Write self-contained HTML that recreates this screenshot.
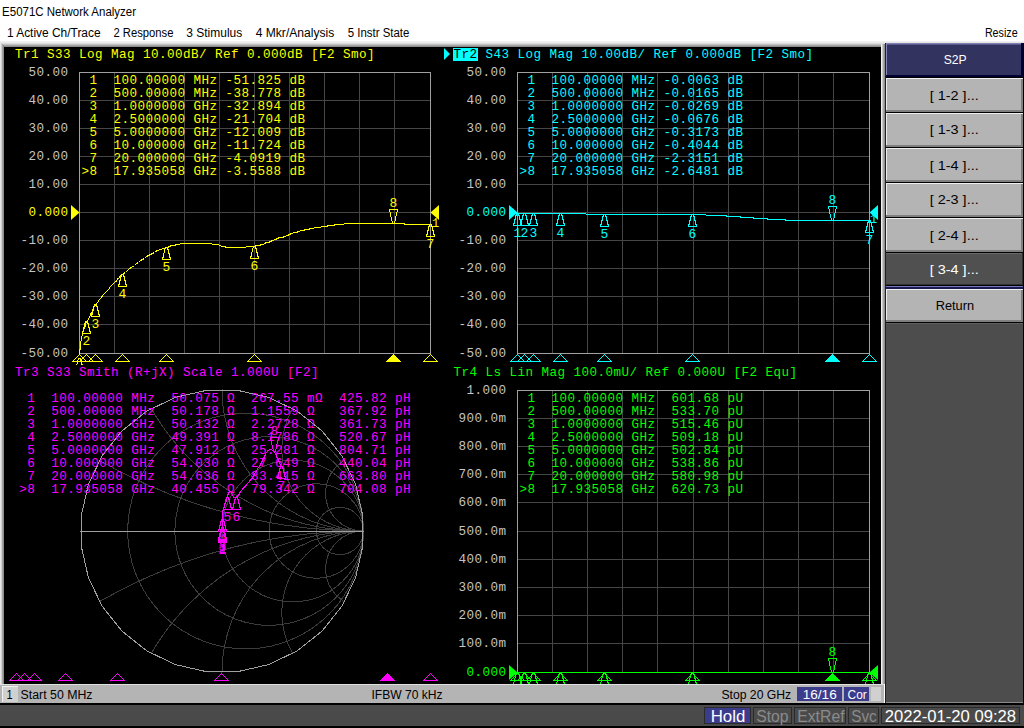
<!DOCTYPE html><html><head><meta charset="utf-8"><style>html,body{margin:0;padding:0;width:1024px;height:728px;overflow:hidden;background:#fff}</style></head><body><svg width="1024" height="728" viewBox="0 0 1024 728" style="display:block">
<rect x="0" y="0" width="1024" height="728" fill="#ffffff" />
<text x="2.10" y="16" fill="#000000" font-size="12.5" font-family='"Liberation Sans", sans-serif' textLength="133.90" lengthAdjust="spacingAndGlyphs" xml:space="preserve">E5071C Network Analyzer</text>
<text x="6.90" y="37" fill="#000000" font-size="12.5" font-family='"Liberation Sans", sans-serif' textLength="93.70" lengthAdjust="spacingAndGlyphs" xml:space="preserve">1 Active Ch/Trace</text>
<text x="113.40" y="37" fill="#000000" font-size="12.5" font-family='"Liberation Sans", sans-serif' textLength="60.00" lengthAdjust="spacingAndGlyphs" xml:space="preserve">2 Response</text>
<text x="186.30" y="37" fill="#000000" font-size="12.5" font-family='"Liberation Sans", sans-serif' textLength="55.90" lengthAdjust="spacingAndGlyphs" xml:space="preserve">3 Stimulus</text>
<text x="255.65" y="37" fill="#000000" font-size="12.5" font-family='"Liberation Sans", sans-serif' textLength="78.70" lengthAdjust="spacingAndGlyphs" xml:space="preserve">4 Mkr/Analysis</text>
<text x="347.80" y="37" fill="#000000" font-size="12.5" font-family='"Liberation Sans", sans-serif' textLength="61.55" lengthAdjust="spacingAndGlyphs" xml:space="preserve">5 Instr State</text>
<text x="984.90" y="37" fill="#000000" font-size="12.5" font-family='"Liberation Sans", sans-serif' textLength="32.70" lengthAdjust="spacingAndGlyphs" xml:space="preserve">Resize</text>
<rect x="0" y="41" width="885" height="643" fill="#e8e8e8" />
<rect x="0" y="41" width="885" height="1" fill="#f0f0f0" />
<rect x="0" y="42" width="885" height="1" fill="#ececec" />
<rect x="0" y="43" width="885" height="1" fill="#dcdcdc" />
<rect x="0" y="44" width="885" height="1" fill="#c0c0c0" />
<rect x="0" y="45" width="885" height="1" fill="#a4a4a4" />
<rect x="0" y="46" width="885" height="1" fill="#8c8c8c" />
<rect x="0" y="42" width="1" height="642" fill="#e8e8e8" />
<rect x="1" y="43" width="1" height="641" fill="#d0d0d0" />
<rect x="2" y="44" width="1" height="640" fill="#a4a4a4" />
<rect x="3" y="45" width="1" height="639" fill="#8c8c8c" />
<rect x="881" y="44" width="1" height="640" fill="#f0f0f0" />
<rect x="882" y="44" width="1" height="640" fill="#c8c8c8" />
<rect x="883" y="44" width="1" height="640" fill="#a8a8a8" />
<rect x="884" y="44" width="1" height="640" fill="#909090" />
<rect x="4" y="47" width="877" height="637" fill="#000000" />
<line x1="114.5" y1="72.5" x2="114.5" y2="353.5" stroke="#464646" stroke-width="1" />
<line x1="149.5" y1="72.5" x2="149.5" y2="353.5" stroke="#464646" stroke-width="1" />
<line x1="184.5" y1="72.5" x2="184.5" y2="353.5" stroke="#464646" stroke-width="1" />
<line x1="219.5" y1="72.5" x2="219.5" y2="353.5" stroke="#464646" stroke-width="1" />
<line x1="254.5" y1="72.5" x2="254.5" y2="353.5" stroke="#464646" stroke-width="1" />
<line x1="289.5" y1="72.5" x2="289.5" y2="353.5" stroke="#464646" stroke-width="1" />
<line x1="324.5" y1="72.5" x2="324.5" y2="353.5" stroke="#464646" stroke-width="1" />
<line x1="359.5" y1="72.5" x2="359.5" y2="353.5" stroke="#464646" stroke-width="1" />
<line x1="394.5" y1="72.5" x2="394.5" y2="353.5" stroke="#464646" stroke-width="1" />
<line x1="79.5" y1="100.5" x2="430.5" y2="100.5" stroke="#464646" stroke-width="1" />
<line x1="79.5" y1="128.5" x2="430.5" y2="128.5" stroke="#464646" stroke-width="1" />
<line x1="79.5" y1="156.5" x2="430.5" y2="156.5" stroke="#464646" stroke-width="1" />
<line x1="79.5" y1="184.5" x2="430.5" y2="184.5" stroke="#464646" stroke-width="1" />
<line x1="79.5" y1="212.5" x2="430.5" y2="212.5" stroke="#464646" stroke-width="1" />
<line x1="79.5" y1="240.5" x2="430.5" y2="240.5" stroke="#464646" stroke-width="1" />
<line x1="79.5" y1="268.5" x2="430.5" y2="268.5" stroke="#464646" stroke-width="1" />
<line x1="79.5" y1="296.5" x2="430.5" y2="296.5" stroke="#464646" stroke-width="1" />
<line x1="79.5" y1="324.5" x2="430.5" y2="324.5" stroke="#464646" stroke-width="1" />
<rect x="79.5" y="72.5" width="351" height="281" fill="none" stroke="#a0a0a0" stroke-width="1"/>
<line x1="552.5" y1="72.5" x2="552.5" y2="353.5" stroke="#464646" stroke-width="1" />
<line x1="587.5" y1="72.5" x2="587.5" y2="353.5" stroke="#464646" stroke-width="1" />
<line x1="622.5" y1="72.5" x2="622.5" y2="353.5" stroke="#464646" stroke-width="1" />
<line x1="657.5" y1="72.5" x2="657.5" y2="353.5" stroke="#464646" stroke-width="1" />
<line x1="693.5" y1="72.5" x2="693.5" y2="353.5" stroke="#464646" stroke-width="1" />
<line x1="728.5" y1="72.5" x2="728.5" y2="353.5" stroke="#464646" stroke-width="1" />
<line x1="763.5" y1="72.5" x2="763.5" y2="353.5" stroke="#464646" stroke-width="1" />
<line x1="798.5" y1="72.5" x2="798.5" y2="353.5" stroke="#464646" stroke-width="1" />
<line x1="833.5" y1="72.5" x2="833.5" y2="353.5" stroke="#464646" stroke-width="1" />
<line x1="517.5" y1="100.5" x2="869.5" y2="100.5" stroke="#464646" stroke-width="1" />
<line x1="517.5" y1="128.5" x2="869.5" y2="128.5" stroke="#464646" stroke-width="1" />
<line x1="517.5" y1="156.5" x2="869.5" y2="156.5" stroke="#464646" stroke-width="1" />
<line x1="517.5" y1="184.5" x2="869.5" y2="184.5" stroke="#464646" stroke-width="1" />
<line x1="517.5" y1="212.5" x2="869.5" y2="212.5" stroke="#464646" stroke-width="1" />
<line x1="517.5" y1="240.5" x2="869.5" y2="240.5" stroke="#464646" stroke-width="1" />
<line x1="517.5" y1="268.5" x2="869.5" y2="268.5" stroke="#464646" stroke-width="1" />
<line x1="517.5" y1="296.5" x2="869.5" y2="296.5" stroke="#464646" stroke-width="1" />
<line x1="517.5" y1="324.5" x2="869.5" y2="324.5" stroke="#464646" stroke-width="1" />
<rect x="517.5" y="72.5" width="352" height="281" fill="none" stroke="#a0a0a0" stroke-width="1"/>
<line x1="552.5" y1="390.5" x2="552.5" y2="672.5" stroke="#464646" stroke-width="1" />
<line x1="587.5" y1="390.5" x2="587.5" y2="672.5" stroke="#464646" stroke-width="1" />
<line x1="622.5" y1="390.5" x2="622.5" y2="672.5" stroke="#464646" stroke-width="1" />
<line x1="657.5" y1="390.5" x2="657.5" y2="672.5" stroke="#464646" stroke-width="1" />
<line x1="693.5" y1="390.5" x2="693.5" y2="672.5" stroke="#464646" stroke-width="1" />
<line x1="728.5" y1="390.5" x2="728.5" y2="672.5" stroke="#464646" stroke-width="1" />
<line x1="763.5" y1="390.5" x2="763.5" y2="672.5" stroke="#464646" stroke-width="1" />
<line x1="798.5" y1="390.5" x2="798.5" y2="672.5" stroke="#464646" stroke-width="1" />
<line x1="833.5" y1="390.5" x2="833.5" y2="672.5" stroke="#464646" stroke-width="1" />
<line x1="517.5" y1="418.5" x2="869.5" y2="418.5" stroke="#464646" stroke-width="1" />
<line x1="517.5" y1="446.5" x2="869.5" y2="446.5" stroke="#464646" stroke-width="1" />
<line x1="517.5" y1="474.5" x2="869.5" y2="474.5" stroke="#464646" stroke-width="1" />
<line x1="517.5" y1="502.5" x2="869.5" y2="502.5" stroke="#464646" stroke-width="1" />
<line x1="517.5" y1="531.5" x2="869.5" y2="531.5" stroke="#464646" stroke-width="1" />
<line x1="517.5" y1="559.5" x2="869.5" y2="559.5" stroke="#464646" stroke-width="1" />
<line x1="517.5" y1="587.5" x2="869.5" y2="587.5" stroke="#464646" stroke-width="1" />
<line x1="517.5" y1="615.5" x2="869.5" y2="615.5" stroke="#464646" stroke-width="1" />
<line x1="517.5" y1="643.5" x2="869.5" y2="643.5" stroke="#464646" stroke-width="1" />
<rect x="517.5" y="390.5" width="352" height="282" fill="none" stroke="#a0a0a0" stroke-width="1"/>
<text x="68.44" y="75.5" fill="#c4c4c4" font-size="12.6" letter-spacing="0.440" text-anchor="end" font-family='"Liberation Mono", monospace'  xml:space="preserve">50.00</text>
<text x="68.44" y="103.5" fill="#c4c4c4" font-size="12.6" letter-spacing="0.440" text-anchor="end" font-family='"Liberation Mono", monospace'  xml:space="preserve">40.00</text>
<text x="68.44" y="131.5" fill="#c4c4c4" font-size="12.6" letter-spacing="0.440" text-anchor="end" font-family='"Liberation Mono", monospace'  xml:space="preserve">30.00</text>
<text x="68.44" y="159.5" fill="#c4c4c4" font-size="12.6" letter-spacing="0.440" text-anchor="end" font-family='"Liberation Mono", monospace'  xml:space="preserve">20.00</text>
<text x="68.44" y="187.5" fill="#c4c4c4" font-size="12.6" letter-spacing="0.440" text-anchor="end" font-family='"Liberation Mono", monospace'  xml:space="preserve">10.00</text>
<text x="68.44" y="215.5" fill="#ffff00" font-size="12.6" letter-spacing="0.440" text-anchor="end" font-family='"Liberation Mono", monospace'  xml:space="preserve">0.000</text>
<text x="68.44" y="243.5" fill="#c4c4c4" font-size="12.6" letter-spacing="0.440" text-anchor="end" font-family='"Liberation Mono", monospace'  xml:space="preserve">-10.00</text>
<text x="68.44" y="271.5" fill="#c4c4c4" font-size="12.6" letter-spacing="0.440" text-anchor="end" font-family='"Liberation Mono", monospace'  xml:space="preserve">-20.00</text>
<text x="68.44" y="299.5" fill="#c4c4c4" font-size="12.6" letter-spacing="0.440" text-anchor="end" font-family='"Liberation Mono", monospace'  xml:space="preserve">-30.00</text>
<text x="68.44" y="327.5" fill="#c4c4c4" font-size="12.6" letter-spacing="0.440" text-anchor="end" font-family='"Liberation Mono", monospace'  xml:space="preserve">-40.00</text>
<text x="68.44" y="356.5" fill="#c4c4c4" font-size="12.6" letter-spacing="0.440" text-anchor="end" font-family='"Liberation Mono", monospace'  xml:space="preserve">-50.00</text>
<text x="506.44" y="75.5" fill="#c4c4c4" font-size="12.6" letter-spacing="0.440" text-anchor="end" font-family='"Liberation Mono", monospace'  xml:space="preserve">50.00</text>
<text x="506.44" y="103.5" fill="#c4c4c4" font-size="12.6" letter-spacing="0.440" text-anchor="end" font-family='"Liberation Mono", monospace'  xml:space="preserve">40.00</text>
<text x="506.44" y="131.5" fill="#c4c4c4" font-size="12.6" letter-spacing="0.440" text-anchor="end" font-family='"Liberation Mono", monospace'  xml:space="preserve">30.00</text>
<text x="506.44" y="159.5" fill="#c4c4c4" font-size="12.6" letter-spacing="0.440" text-anchor="end" font-family='"Liberation Mono", monospace'  xml:space="preserve">20.00</text>
<text x="506.44" y="187.5" fill="#c4c4c4" font-size="12.6" letter-spacing="0.440" text-anchor="end" font-family='"Liberation Mono", monospace'  xml:space="preserve">10.00</text>
<text x="506.44" y="215.5" fill="#00ffff" font-size="12.6" letter-spacing="0.440" text-anchor="end" font-family='"Liberation Mono", monospace'  xml:space="preserve">0.000</text>
<text x="506.44" y="243.5" fill="#c4c4c4" font-size="12.6" letter-spacing="0.440" text-anchor="end" font-family='"Liberation Mono", monospace'  xml:space="preserve">-10.00</text>
<text x="506.44" y="271.5" fill="#c4c4c4" font-size="12.6" letter-spacing="0.440" text-anchor="end" font-family='"Liberation Mono", monospace'  xml:space="preserve">-20.00</text>
<text x="506.44" y="299.5" fill="#c4c4c4" font-size="12.6" letter-spacing="0.440" text-anchor="end" font-family='"Liberation Mono", monospace'  xml:space="preserve">-30.00</text>
<text x="506.44" y="327.5" fill="#c4c4c4" font-size="12.6" letter-spacing="0.440" text-anchor="end" font-family='"Liberation Mono", monospace'  xml:space="preserve">-40.00</text>
<text x="506.44" y="356.5" fill="#c4c4c4" font-size="12.6" letter-spacing="0.440" text-anchor="end" font-family='"Liberation Mono", monospace'  xml:space="preserve">-50.00</text>
<text x="506.44" y="393.5" fill="#c4c4c4" font-size="12.6" letter-spacing="0.440" text-anchor="end" font-family='"Liberation Mono", monospace'  xml:space="preserve">1.000</text>
<text x="506.44" y="421.5" fill="#c4c4c4" font-size="12.6" letter-spacing="0.440" text-anchor="end" font-family='"Liberation Mono", monospace'  xml:space="preserve">900.0m</text>
<text x="506.44" y="449.5" fill="#c4c4c4" font-size="12.6" letter-spacing="0.440" text-anchor="end" font-family='"Liberation Mono", monospace'  xml:space="preserve">800.0m</text>
<text x="506.44" y="477.5" fill="#c4c4c4" font-size="12.6" letter-spacing="0.440" text-anchor="end" font-family='"Liberation Mono", monospace'  xml:space="preserve">700.0m</text>
<text x="506.44" y="505.5" fill="#c4c4c4" font-size="12.6" letter-spacing="0.440" text-anchor="end" font-family='"Liberation Mono", monospace'  xml:space="preserve">600.0m</text>
<text x="506.44" y="534.5" fill="#c4c4c4" font-size="12.6" letter-spacing="0.440" text-anchor="end" font-family='"Liberation Mono", monospace'  xml:space="preserve">500.0m</text>
<text x="506.44" y="562.5" fill="#c4c4c4" font-size="12.6" letter-spacing="0.440" text-anchor="end" font-family='"Liberation Mono", monospace'  xml:space="preserve">400.0m</text>
<text x="506.44" y="590.5" fill="#c4c4c4" font-size="12.6" letter-spacing="0.440" text-anchor="end" font-family='"Liberation Mono", monospace'  xml:space="preserve">300.0m</text>
<text x="506.44" y="618.5" fill="#c4c4c4" font-size="12.6" letter-spacing="0.440" text-anchor="end" font-family='"Liberation Mono", monospace'  xml:space="preserve">200.0m</text>
<text x="506.44" y="646.5" fill="#c4c4c4" font-size="12.6" letter-spacing="0.440" text-anchor="end" font-family='"Liberation Mono", monospace'  xml:space="preserve">100.0m</text>
<text x="506.44" y="675.5" fill="#00ff00" font-size="12.6" letter-spacing="0.440" text-anchor="end" font-family='"Liberation Mono", monospace'  xml:space="preserve">0.000</text>
<text x="15" y="58" fill="#ffff00" font-size="12.6" letter-spacing="0.440" text-anchor="start" font-family='"Liberation Mono", monospace'  xml:space="preserve">Tr1 S33 Log Mag 10.00dB/ Ref 0.000dB [F2 Smo]</text>
<polygon points="444,48 444,60 450,54" fill="#00ffff"/>
<rect x="453" y="48" width="25" height="13" fill="#00ffff" />
<text x="453.5" y="58" fill="#000000" font-size="12.6" letter-spacing="0.440" text-anchor="start" font-family='"Liberation Mono", monospace'  xml:space="preserve">Tr2</text>
<text x="453.5" y="58" fill="#00ffff" font-size="12.6" letter-spacing="0.440" text-anchor="start" font-family='"Liberation Mono", monospace'  xml:space="preserve">    S43 Log Mag 10.00dB/ Ref 0.000dB [F2 Smo]</text>
<text x="15" y="376" fill="#ff00ff" font-size="12.6" letter-spacing="0.440" text-anchor="start" font-family='"Liberation Mono", monospace'  xml:space="preserve">Tr3 S33 Smith (R+jX) Scale 1.000U [F2]</text>
<text x="453.5" y="376" fill="#00ff00" font-size="12.6" letter-spacing="0.440" text-anchor="start" font-family='"Liberation Mono", monospace'  xml:space="preserve">Tr4 Ls Lin Mag 100.0mU/ Ref 0.000U [F2 Equ]</text>
<defs><clipPath id="uc"><circle cx="222.00" cy="531.00" r="142.00"/></clipPath></defs>
<g clip-path="url(#uc)" shape-rendering="crispEdges" stroke-opacity="0.85"><circle cx="245.58" cy="531.00" r="117.92" fill="none" stroke="#464646"/><circle cx="269.17" cy="531.00" r="94.33" fill="none" stroke="#464646"/><circle cx="292.75" cy="531.00" r="70.75" fill="none" stroke="#464646"/><circle cx="316.33" cy="531.00" r="47.17" fill="none" stroke="#464646"/><circle cx="339.92" cy="531.00" r="23.58" fill="none" stroke="#464646"/><circle cx="363.50" cy="2.91" r="528.09" fill="none" stroke="#464646"/><circle cx="363.50" cy="1059.09" r="528.09" fill="none" stroke="#464646"/><circle cx="363.50" cy="285.91" r="245.09" fill="none" stroke="#464646"/><circle cx="363.50" cy="776.09" r="245.09" fill="none" stroke="#464646"/><circle cx="363.50" cy="389.50" r="141.50" fill="none" stroke="#464646"/><circle cx="363.50" cy="672.50" r="141.50" fill="none" stroke="#464646"/><circle cx="363.50" cy="449.30" r="81.70" fill="none" stroke="#464646"/><circle cx="363.50" cy="612.70" r="81.70" fill="none" stroke="#464646"/><circle cx="363.50" cy="493.09" r="37.91" fill="none" stroke="#464646"/><circle cx="363.50" cy="568.91" r="37.91" fill="none" stroke="#464646"/></g>
<polygon points="362.61,515.16 355.56,484.27 341.81,455.72 322.06,430.94 297.28,411.19 268.73,397.44 237.84,390.39 206.16,390.39 175.27,397.44 146.72,411.19 121.94,430.94 102.19,455.72 88.44,484.27 81.39,515.16 81.39,546.84 88.44,577.73 102.19,606.28 121.94,631.06 146.72,650.81 175.27,664.56 206.16,671.61 237.84,671.61 268.73,664.56 297.28,650.81 322.06,631.06 341.81,606.28 355.56,577.73 362.61,546.84" fill="none" stroke="#a0a0a0" shape-rendering="crispEdges"/>
<line x1="80" y1="531.5" x2="364" y2="531.5" stroke="#a0a0a0" stroke-width="1" />
<text x="81.5" y="84" fill="#ffff00" font-size="12.6" letter-spacing="0.440" text-anchor="start" font-family='"Liberation Mono", monospace'  xml:space="preserve"> 1  100.00000 MHz -51.825 dB</text>
<text x="81.5" y="97" fill="#ffff00" font-size="12.6" letter-spacing="0.440" text-anchor="start" font-family='"Liberation Mono", monospace'  xml:space="preserve"> 2  500.00000 MHz -38.778 dB</text>
<text x="81.5" y="110" fill="#ffff00" font-size="12.6" letter-spacing="0.440" text-anchor="start" font-family='"Liberation Mono", monospace'  xml:space="preserve"> 3  1.0000000 GHz -32.894 dB</text>
<text x="81.5" y="123" fill="#ffff00" font-size="12.6" letter-spacing="0.440" text-anchor="start" font-family='"Liberation Mono", monospace'  xml:space="preserve"> 4  2.5000000 GHz -21.704 dB</text>
<text x="81.5" y="136" fill="#ffff00" font-size="12.6" letter-spacing="0.440" text-anchor="start" font-family='"Liberation Mono", monospace'  xml:space="preserve"> 5  5.0000000 GHz -12.009 dB</text>
<text x="81.5" y="149" fill="#ffff00" font-size="12.6" letter-spacing="0.440" text-anchor="start" font-family='"Liberation Mono", monospace'  xml:space="preserve"> 6  10.000000 GHz -11.724 dB</text>
<text x="81.5" y="162" fill="#ffff00" font-size="12.6" letter-spacing="0.440" text-anchor="start" font-family='"Liberation Mono", monospace'  xml:space="preserve"> 7  20.000000 GHz -4.0919 dB</text>
<text x="81.5" y="175" fill="#ffff00" font-size="12.6" letter-spacing="0.440" text-anchor="start" font-family='"Liberation Mono", monospace'  xml:space="preserve">&gt;8  17.935058 GHz -3.5588 dB</text>
<text x="519.5" y="84" fill="#00ffff" font-size="12.6" letter-spacing="0.440" text-anchor="start" font-family='"Liberation Mono", monospace'  xml:space="preserve"> 1  100.00000 MHz -0.0063 dB</text>
<text x="519.5" y="97" fill="#00ffff" font-size="12.6" letter-spacing="0.440" text-anchor="start" font-family='"Liberation Mono", monospace'  xml:space="preserve"> 2  500.00000 MHz -0.0165 dB</text>
<text x="519.5" y="110" fill="#00ffff" font-size="12.6" letter-spacing="0.440" text-anchor="start" font-family='"Liberation Mono", monospace'  xml:space="preserve"> 3  1.0000000 GHz -0.0269 dB</text>
<text x="519.5" y="123" fill="#00ffff" font-size="12.6" letter-spacing="0.440" text-anchor="start" font-family='"Liberation Mono", monospace'  xml:space="preserve"> 4  2.5000000 GHz -0.0676 dB</text>
<text x="519.5" y="136" fill="#00ffff" font-size="12.6" letter-spacing="0.440" text-anchor="start" font-family='"Liberation Mono", monospace'  xml:space="preserve"> 5  5.0000000 GHz -0.3173 dB</text>
<text x="519.5" y="149" fill="#00ffff" font-size="12.6" letter-spacing="0.440" text-anchor="start" font-family='"Liberation Mono", monospace'  xml:space="preserve"> 6  10.000000 GHz -0.4044 dB</text>
<text x="519.5" y="162" fill="#00ffff" font-size="12.6" letter-spacing="0.440" text-anchor="start" font-family='"Liberation Mono", monospace'  xml:space="preserve"> 7  20.000000 GHz -2.3151 dB</text>
<text x="519.5" y="175" fill="#00ffff" font-size="12.6" letter-spacing="0.440" text-anchor="start" font-family='"Liberation Mono", monospace'  xml:space="preserve">&gt;8  17.935058 GHz -2.6481 dB</text>
<text x="19.2" y="402" fill="#ff00ff" font-size="12.6" letter-spacing="0.440" text-anchor="start" font-family='"Liberation Mono", monospace'  xml:space="preserve"> 1  100.00000 MHz  50.075 Ω  267.55 mΩ  425.82 pH</text>
<text x="19.2" y="415" fill="#ff00ff" font-size="12.6" letter-spacing="0.440" text-anchor="start" font-family='"Liberation Mono", monospace'  xml:space="preserve"> 2  500.00000 MHz  50.178 Ω  1.1559 Ω   367.92 pH</text>
<text x="19.2" y="428" fill="#ff00ff" font-size="12.6" letter-spacing="0.440" text-anchor="start" font-family='"Liberation Mono", monospace'  xml:space="preserve"> 3  1.0000000 GHz  50.132 Ω  2.2728 Ω   361.73 pH</text>
<text x="19.2" y="441" fill="#ff00ff" font-size="12.6" letter-spacing="0.440" text-anchor="start" font-family='"Liberation Mono", monospace'  xml:space="preserve"> 4  2.5000000 GHz  49.391 Ω  8.1786 Ω   520.67 pH</text>
<text x="19.2" y="454" fill="#ff00ff" font-size="12.6" letter-spacing="0.440" text-anchor="start" font-family='"Liberation Mono", monospace'  xml:space="preserve"> 5  5.0000000 GHz  47.912 Ω  25.281 Ω   804.71 pH</text>
<text x="19.2" y="467" fill="#ff00ff" font-size="12.6" letter-spacing="0.440" text-anchor="start" font-family='"Liberation Mono", monospace'  xml:space="preserve"> 6  10.000000 GHz  54.030 Ω  27.649 Ω   440.04 pH</text>
<text x="19.2" y="480" fill="#ff00ff" font-size="12.6" letter-spacing="0.440" text-anchor="start" font-family='"Liberation Mono", monospace'  xml:space="preserve"> 7  20.000000 GHz  54.636 Ω  83.415 Ω   663.80 pH</text>
<text x="19.2" y="493" fill="#ff00ff" font-size="12.6" letter-spacing="0.440" text-anchor="start" font-family='"Liberation Mono", monospace'  xml:space="preserve">&gt;8  17.935058 GHz  40.455 Ω  79.342 Ω   704.08 pH</text>
<text x="519.5" y="402" fill="#00ff00" font-size="12.6" letter-spacing="0.440" text-anchor="start" font-family='"Liberation Mono", monospace'  xml:space="preserve"> 1  100.00000 MHz  601.68 pU</text>
<text x="519.5" y="415" fill="#00ff00" font-size="12.6" letter-spacing="0.440" text-anchor="start" font-family='"Liberation Mono", monospace'  xml:space="preserve"> 2  500.00000 MHz  533.70 pU</text>
<text x="519.5" y="428" fill="#00ff00" font-size="12.6" letter-spacing="0.440" text-anchor="start" font-family='"Liberation Mono", monospace'  xml:space="preserve"> 3  1.0000000 GHz  515.46 pU</text>
<text x="519.5" y="441" fill="#00ff00" font-size="12.6" letter-spacing="0.440" text-anchor="start" font-family='"Liberation Mono", monospace'  xml:space="preserve"> 4  2.5000000 GHz  509.18 pU</text>
<text x="519.5" y="454" fill="#00ff00" font-size="12.6" letter-spacing="0.440" text-anchor="start" font-family='"Liberation Mono", monospace'  xml:space="preserve"> 5  5.0000000 GHz  502.84 pU</text>
<text x="519.5" y="467" fill="#00ff00" font-size="12.6" letter-spacing="0.440" text-anchor="start" font-family='"Liberation Mono", monospace'  xml:space="preserve"> 6  10.000000 GHz  538.86 pU</text>
<text x="519.5" y="480" fill="#00ff00" font-size="12.6" letter-spacing="0.440" text-anchor="start" font-family='"Liberation Mono", monospace'  xml:space="preserve"> 7  20.000000 GHz  580.98 pU</text>
<text x="519.5" y="493" fill="#00ff00" font-size="12.6" letter-spacing="0.440" text-anchor="start" font-family='"Liberation Mono", monospace'  xml:space="preserve">&gt;8  17.935058 GHz  620.73 pU</text>
<defs><clipPath id="p1"><rect x="4" y="47" width="438" height="318"/></clipPath><clipPath id="p2"><rect x="442" y="47" width="439" height="318"/></clipPath><clipPath id="p3"><rect x="4" y="365" width="438" height="319"/></clipPath><clipPath id="p4"><rect x="442" y="365" width="439" height="319"/></clipPath></defs>
<g clip-path="url(#p1)">
<clipPath id="c1"><rect x="79" y="72" width="352" height="282"/></clipPath>
<g clip-path="url(#c1)">
<path d="M79.5,358.5 L79.5,357.5 L79.5,356.5 L79.5,355.5 L79.5,354.5 L79.5,353.5 L79.5,352.5 L79.5,351.5 L79.5,350.5 L80.5,348.5 L80.5,347.5 L80.5,345.5 L80.5,344.5 L80.5,342.5 L80.5,341.5 L81.5,340.5 L81.5,338.5 L81.5,337.5 L81.5,336.5 L82.5,335.5 L82.5,333.5 L82.5,332.5 L83.5,331.5 L83.5,330.5 L83.5,329.5 L84.5,328.5 L84.5,327.5 L85.5,326.5 L85.5,324.5 L85.5,323.5 L86.5,322.5 L86.5,321.5 L87.5,320.5 L88.5,319.5 L88.5,318.5 L89.5,317.5 L89.5,316.5 L90.5,315.5 L90.5,314.5 L91.5,312.5 L92.5,311.5 L92.5,310.5 L93.5,308.5 L93.5,307.5 L94.5,306.5 L95.5,305.5 L95.5,304.5 L96.5,303.5 L97.5,302.5 L98.5,301.5 L98.5,300.5 L99.5,299.5 L100.5,298.5 L101.5,297.5 L102.5,295.5 L103.5,294.5 L104.5,293.5 L105.5,292.5 L106.5,291.5 L107.5,290.5 L108.5,289.5 L109.5,288.5 L109.5,287.5 L110.5,286.5 L111.5,285.5 L112.5,284.5 L113.5,283.5 L114.5,282.5 L115.5,281.5 L116.5,281.5 L116.5,280.5 L117.5,279.5 L117.5,278.5 L118.5,278.5 L119.5,277.5 L119.5,276.5 L120.5,275.5 L122.5,274.5 L123.5,273.5 L125.5,272.5 L127.5,270.5 L129.5,268.5 L131.5,267.5 L134.5,265.5 L136.5,263.5 L138.5,262.5 L140.5,260.5 L142.5,259.5 L144.5,258.5 L146.5,256.5 L148.5,255.5 L150.5,254.5 L152.5,253.5 L154.5,252.5 L155.5,251.5 L157.5,250.5 L158.5,250.5 L159.5,249.5 L161.5,249.5 L162.5,248.5 L164.5,248.5 L165.5,247.5 L167.5,247.5 L169.5,246.5 L171.5,245.5 L174.5,245.5 L176.5,244.5 L178.5,244.5 L181.5,243.5 L183.5,243.5 L186.5,243.5 L188.5,243.5 L191.5,243.5 L194.5,243.5 L197.5,243.5 L200.5,243.5 L202.5,243.5 L205.5,243.5 L206.5,243.5 L208.5,243.5 L210.5,243.5 L211.5,243.5 L212.5,244.5 L214.5,244.5 L215.5,244.5 L216.5,244.5 L218.5,244.5 L219.5,245.5 L220.5,245.5 L221.5,246.5 L223.5,246.5 L224.5,246.5 L226.5,247.5 L228.5,247.5 L230.5,247.5 L234.5,247.5 L237.5,247.5 L240.5,247.5 L244.5,247.5 L247.5,246.5 L251.5,246.5 L253.5,246.5 L256.5,245.5 L258.5,245.5 L259.5,245.5 L261.5,244.5 L263.5,244.5 L264.5,243.5 L266.5,242.5 L268.5,242.5 L270.5,241.5 L272.5,240.5 L275.5,239.5 L277.5,238.5 L279.5,237.5 L282.5,237.5 L284.5,236.5 L287.5,235.5 L289.5,234.5 L291.5,233.5 L294.5,232.5 L296.5,232.5 L298.5,231.5 L301.5,230.5 L303.5,230.5 L305.5,229.5 L308.5,229.5 L310.5,228.5 L312.5,228.5 L315.5,227.5 L317.5,227.5 L319.5,227.5 L322.5,226.5 L324.5,226.5 L326.5,226.5 L328.5,225.5 L330.5,225.5 L331.5,225.5 L333.5,225.5 L335.5,224.5 L337.5,224.5 L339.5,224.5 L340.5,224.5 L342.5,224.5 L343.5,224.5 L344.5,223.5 L346.5,223.5 L348.5,223.5 L350.5,223.5 L353.5,223.5 L357.5,223.5 L362.5,223.5 L367.5,223.5 L373.5,223.5 L379.5,223.5 L384.5,223.5 L389.5,223.5 L392.5,223.5 L395.5,223.5 L397.5,223.5 L399.5,223.5 L400.5,223.5 L401.5,223.5 L402.5,223.5 L403.5,223.5 L404.5,223.5 L404.5,224.5 L406.5,224.5 L408.5,224.5 L411.5,224.5 L414.5,224.5 L418.5,224.5 L421.5,224.5 L425.5,224.5 L427.5,224.5 L430.5,224.5" fill="none" stroke="#ffff00" stroke-width="1" shape-rendering="crispEdges" />
</g>
<polygon points="78.5,358.5 80.5,358.5 83.5,370.5 75.5,370.5" fill="none" stroke="#ffff00" shape-rendering="crispEdges"/>
<text x="79.5" y="382" fill="#ffff00" font-size="13" text-anchor="middle" font-family='"Liberation Mono", monospace'  xml:space="preserve">1</text>
<polygon points="85.5,321.5 87.5,321.5 90.5,333.5 82.5,333.5" fill="none" stroke="#ffff00" shape-rendering="crispEdges"/>
<text x="86.5" y="345" fill="#ffff00" font-size="13" text-anchor="middle" font-family='"Liberation Mono", monospace'  xml:space="preserve">2</text>
<polygon points="94.5,304.5 96.5,304.5 99.5,316.5 91.5,316.5" fill="none" stroke="#ffff00" shape-rendering="crispEdges"/>
<text x="95.5" y="328" fill="#ffff00" font-size="13" text-anchor="middle" font-family='"Liberation Mono", monospace'  xml:space="preserve">3</text>
<polygon points="121.5,274.5 123.5,274.5 126.5,286.5 118.5,286.5" fill="none" stroke="#ffff00" shape-rendering="crispEdges"/>
<text x="122.5" y="298" fill="#ffff00" font-size="13" text-anchor="middle" font-family='"Liberation Mono", monospace'  xml:space="preserve">4</text>
<polygon points="165.5,247.5 167.5,247.5 170.5,259.5 162.5,259.5" fill="none" stroke="#ffff00" shape-rendering="crispEdges"/>
<text x="166.5" y="271" fill="#ffff00" font-size="13" text-anchor="middle" font-family='"Liberation Mono", monospace'  xml:space="preserve">5</text>
<polygon points="253.5,246.5 255.5,246.5 258.5,258.5 250.5,258.5" fill="none" stroke="#ffff00" shape-rendering="crispEdges"/>
<text x="254.5" y="270" fill="#ffff00" font-size="13" text-anchor="middle" font-family='"Liberation Mono", monospace'  xml:space="preserve">6</text>
<polygon points="429.5,224.5 431.5,224.5 434.5,236.5 426.5,236.5" fill="none" stroke="#ffff00" shape-rendering="crispEdges"/>
<text x="430.5" y="248" fill="#ffff00" font-size="13" text-anchor="middle" font-family='"Liberation Mono", monospace'  xml:space="preserve">7</text>
<polygon points="389.5,209.5 397.5,209.5 394.5,223.5 392.5,223.5" fill="none" stroke="#ffff00" shape-rendering="crispEdges"/>
<text x="393.5" y="207" fill="#ffff00" font-size="13" text-anchor="middle" font-family='"Liberation Mono", monospace'  xml:space="preserve">8</text>
<polygon points="79.5,354.5 86.5,361.5 72.5,361.5" fill="none" stroke="#ffff00" shape-rendering="crispEdges"/>
<polygon points="86.5,354.5 93.5,361.5 79.5,361.5" fill="none" stroke="#ffff00" shape-rendering="crispEdges"/>
<polygon points="95.5,354.5 102.5,361.5 88.5,361.5" fill="none" stroke="#ffff00" shape-rendering="crispEdges"/>
<polygon points="122.5,354.5 129.5,361.5 115.5,361.5" fill="none" stroke="#ffff00" shape-rendering="crispEdges"/>
<polygon points="166.5,354.5 173.5,361.5 159.5,361.5" fill="none" stroke="#ffff00" shape-rendering="crispEdges"/>
<polygon points="254.5,354.5 261.5,361.5 247.5,361.5" fill="none" stroke="#ffff00" shape-rendering="crispEdges"/>
<polygon points="430.5,354.5 437.5,361.5 423.5,361.5" fill="none" stroke="#ffff00" shape-rendering="crispEdges"/>
<polygon points="393.5,354.5 400.5,361.5 386.5,361.5" fill="#ffff00" stroke="#ffff00" shape-rendering="crispEdges"/>
<polygon points="71,205 79.5,212.5 71,220" fill="#ffff00"/>
<text x="435.5" y="226.5" fill="#ffff00" font-size="12" text-anchor="middle" font-family='"Liberation Mono", monospace'  xml:space="preserve">1</text>
<polygon points="439,205 430.5,212.5 439,220" fill="#ffff00"/>
</g><g clip-path="url(#p2)">
<path d="M517.5,213.5 L585.5,213.5 L586.5,214.5 L705.5,214.5 L706.5,215.5 L726.5,215.5 L726.5,216.5 L740.5,216.5 L740.5,217.5 L753.5,217.5 L753.5,218.5 L767.5,218.5 L767.5,219.5 L785.5,219.5 L785.5,220.5 L869.5,220.5" fill="none" stroke="#00ffff" stroke-width="1" shape-rendering="crispEdges" />
<polygon points="516.5,213.5 518.5,213.5 521.5,225.5 513.5,225.5" fill="none" stroke="#00ffff" shape-rendering="crispEdges"/>
<text x="517.5" y="237" fill="#00ffff" font-size="13" text-anchor="middle" font-family='"Liberation Mono", monospace'  xml:space="preserve">1</text>
<polygon points="523.5,213.5 525.5,213.5 528.5,225.5 520.5,225.5" fill="none" stroke="#00ffff" shape-rendering="crispEdges"/>
<text x="524.5" y="237" fill="#00ffff" font-size="13" text-anchor="middle" font-family='"Liberation Mono", monospace'  xml:space="preserve">2</text>
<polygon points="532.5,213.5 534.5,213.5 537.5,225.5 529.5,225.5" fill="none" stroke="#00ffff" shape-rendering="crispEdges"/>
<text x="533.5" y="237" fill="#00ffff" font-size="13" text-anchor="middle" font-family='"Liberation Mono", monospace'  xml:space="preserve">3</text>
<polygon points="559.5,213.5 561.5,213.5 564.5,225.5 556.5,225.5" fill="none" stroke="#00ffff" shape-rendering="crispEdges"/>
<text x="560.5" y="237" fill="#00ffff" font-size="13" text-anchor="middle" font-family='"Liberation Mono", monospace'  xml:space="preserve">4</text>
<polygon points="603.5,214.5 605.5,214.5 608.5,226.5 600.5,226.5" fill="none" stroke="#00ffff" shape-rendering="crispEdges"/>
<text x="604.5" y="238" fill="#00ffff" font-size="13" text-anchor="middle" font-family='"Liberation Mono", monospace'  xml:space="preserve">5</text>
<polygon points="691.5,214.5 693.5,214.5 696.5,226.5 688.5,226.5" fill="none" stroke="#00ffff" shape-rendering="crispEdges"/>
<text x="692.5" y="238" fill="#00ffff" font-size="13" text-anchor="middle" font-family='"Liberation Mono", monospace'  xml:space="preserve">6</text>
<polygon points="868.5,220.5 870.5,220.5 873.5,232.5 865.5,232.5" fill="none" stroke="#00ffff" shape-rendering="crispEdges"/>
<text x="869.5" y="244" fill="#00ffff" font-size="13" text-anchor="middle" font-family='"Liberation Mono", monospace'  xml:space="preserve">7</text>
<polygon points="828.5,206.5 836.5,206.5 833.5,220.5 831.5,220.5" fill="none" stroke="#00ffff" shape-rendering="crispEdges"/>
<text x="832.5" y="204" fill="#00ffff" font-size="13" text-anchor="middle" font-family='"Liberation Mono", monospace'  xml:space="preserve">8</text>
<polygon points="517.5,354.5 524.5,361.5 510.5,361.5" fill="none" stroke="#00ffff" shape-rendering="crispEdges"/>
<polygon points="524.5,354.5 531.5,361.5 517.5,361.5" fill="none" stroke="#00ffff" shape-rendering="crispEdges"/>
<polygon points="533.5,354.5 540.5,361.5 526.5,361.5" fill="none" stroke="#00ffff" shape-rendering="crispEdges"/>
<polygon points="560.5,354.5 567.5,361.5 553.5,361.5" fill="none" stroke="#00ffff" shape-rendering="crispEdges"/>
<polygon points="604.5,354.5 611.5,361.5 597.5,361.5" fill="none" stroke="#00ffff" shape-rendering="crispEdges"/>
<polygon points="692.5,354.5 699.5,361.5 685.5,361.5" fill="none" stroke="#00ffff" shape-rendering="crispEdges"/>
<polygon points="869.5,354.5 876.5,361.5 862.5,361.5" fill="none" stroke="#00ffff" shape-rendering="crispEdges"/>
<polygon points="832.5,354.5 839.5,361.5 825.5,361.5" fill="#00ffff" stroke="#00ffff" shape-rendering="crispEdges"/>
<polygon points="509,205 517.5,212.5 509,220" fill="#00ffff"/>
<text x="873.5" y="222.5" fill="#00ffff" font-size="12" text-anchor="middle" font-family='"Liberation Mono", monospace'  xml:space="preserve">1</text>
<polygon points="878,205 869.5,212.5 878,220" fill="#00ffff"/>
</g><g clip-path="url(#p3)">
<path d="M222.5,530.5 L222.5,529.5 L222.5,528.5 L222.5,527.5 L222.5,526.5 L222.5,525.5 L222.5,524.5 L222.5,522.5 L222.5,520.5 L222.5,519.5 L222.5,517.5 L222.5,516.5 L222.5,514.5 L222.5,513.5 L222.5,511.5 L223.5,509.5 L223.5,507.5 L224.5,506.5 L224.5,504.5 L225.5,502.5 L226.5,500.5 L226.5,498.5 L227.5,497.5 L227.5,495.5 L228.5,493.5 L229.5,492.5 L229.5,491.5 L230.5,491.5 L231.5,492.5 L231.5,493.5 L232.5,494.5 L232.5,495.5 L233.5,496.5 L233.5,497.5 L234.5,497.5 L235.5,498.5 L235.5,497.5 L236.5,496.5 L238.5,495.5 L239.5,493.5 L240.5,491.5 L242.5,489.5 L243.5,487.5 L245.5,486.5 L246.5,484.5 L247.5,483.5 L249.5,481.5 L250.5,479.5 L252.5,478.5 L253.5,475.5 L254.5,473.5 L256.5,471.5 L257.5,468.5 L259.5,466.5 L260.5,464.5 L261.5,462.5 L262.5,460.5 L263.5,458.5 L264.5,456.5 L265.5,454.5 L265.5,453.5 L266.5,452.5 L267.5,451.5 L267.5,450.5 L268.5,450.5 L269.5,449.5 L270.5,449.5 L271.5,449.5 L272.5,450.5 L273.5,450.5 L274.5,451.5 L274.5,452.5 L275.5,453.5 L276.5,455.5 L276.5,456.5 L277.5,458.5 L278.5,459.5 L278.5,460.5 L279.5,462.5 L279.5,463.5 L280.5,464.5 L280.5,465.5 L281.5,466.5" fill="none" stroke="#ff00ff" stroke-width="1" shape-rendering="crispEdges" />
<polygon points="221.5,530.5 223.5,530.5 226.5,542.5 218.5,542.5" fill="none" stroke="#ff00ff" shape-rendering="crispEdges"/>
<text x="222.5" y="554" fill="#ff00ff" font-size="13" text-anchor="middle" font-family='"Liberation Mono", monospace'  xml:space="preserve">1</text>
<polygon points="221.5,529.5 223.5,529.5 226.5,541.5 218.5,541.5" fill="none" stroke="#ff00ff" shape-rendering="crispEdges"/>
<text x="222.5" y="553" fill="#ff00ff" font-size="13" text-anchor="middle" font-family='"Liberation Mono", monospace'  xml:space="preserve">2</text>
<polygon points="221.5,527.5 223.5,527.5 226.5,539.5 218.5,539.5" fill="none" stroke="#ff00ff" shape-rendering="crispEdges"/>
<text x="222.5" y="551" fill="#ff00ff" font-size="13" text-anchor="middle" font-family='"Liberation Mono", monospace'  xml:space="preserve">3</text>
<polygon points="221.5,519.5 223.5,519.5 226.5,531.5 218.5,531.5" fill="none" stroke="#ff00ff" shape-rendering="crispEdges"/>
<text x="222.5" y="543" fill="#ff00ff" font-size="13" text-anchor="middle" font-family='"Liberation Mono", monospace'  xml:space="preserve">4</text>
<polygon points="226.5,497.5 228.5,497.5 231.5,509.5 223.5,509.5" fill="none" stroke="#ff00ff" shape-rendering="crispEdges"/>
<text x="227.5" y="521" fill="#ff00ff" font-size="13" text-anchor="middle" font-family='"Liberation Mono", monospace'  xml:space="preserve">5</text>
<polygon points="235.5,497.5 237.5,497.5 240.5,509.5 232.5,509.5" fill="none" stroke="#ff00ff" shape-rendering="crispEdges"/>
<text x="236.5" y="521" fill="#ff00ff" font-size="13" text-anchor="middle" font-family='"Liberation Mono", monospace'  xml:space="preserve">6</text>
<polygon points="280.5,466.5 282.5,466.5 285.5,478.5 277.5,478.5" fill="none" stroke="#ff00ff" shape-rendering="crispEdges"/>
<text x="281.5" y="490" fill="#ff00ff" font-size="13" text-anchor="middle" font-family='"Liberation Mono", monospace'  xml:space="preserve">7</text>
<polygon points="270.5,437.5 278.5,437.5 275.5,451.5 273.5,451.5" fill="none" stroke="#ff00ff" shape-rendering="crispEdges"/>
<text x="274.5" y="435" fill="#ff00ff" font-size="13" text-anchor="middle" font-family='"Liberation Mono", monospace'  xml:space="preserve">8</text>
<polygon points="16.5,673.5 23.5,680.5 9.5,680.5" fill="none" stroke="#ff00ff" shape-rendering="crispEdges"/>
<polygon points="24.5,673.5 31.5,680.5 17.5,680.5" fill="none" stroke="#ff00ff" shape-rendering="crispEdges"/>
<polygon points="34.5,673.5 41.5,680.5 27.5,680.5" fill="none" stroke="#ff00ff" shape-rendering="crispEdges"/>
<polygon points="65.5,673.5 72.5,680.5 58.5,680.5" fill="none" stroke="#ff00ff" shape-rendering="crispEdges"/>
<polygon points="117.5,673.5 124.5,680.5 110.5,680.5" fill="none" stroke="#ff00ff" shape-rendering="crispEdges"/>
<polygon points="221.5,673.5 228.5,680.5 214.5,680.5" fill="none" stroke="#ff00ff" shape-rendering="crispEdges"/>
<polygon points="430.5,673.5 437.5,680.5 423.5,680.5" fill="none" stroke="#ff00ff" shape-rendering="crispEdges"/>
<polygon points="387.5,673.5 394.5,680.5 380.5,680.5" fill="#ff00ff" stroke="#ff00ff" shape-rendering="crispEdges"/>
</g><g clip-path="url(#p4)">
<line x1="517" y1="672.5" x2="869" y2="672.5" stroke="#00ff00" stroke-width="1" />
<polygon points="516.5,672.5 518.5,672.5 521.5,684.5 513.5,684.5" fill="none" stroke="#00ff00" shape-rendering="crispEdges"/>
<polygon points="523.5,672.5 525.5,672.5 528.5,684.5 520.5,684.5" fill="none" stroke="#00ff00" shape-rendering="crispEdges"/>
<polygon points="532.5,672.5 534.5,672.5 537.5,684.5 529.5,684.5" fill="none" stroke="#00ff00" shape-rendering="crispEdges"/>
<polygon points="559.5,672.5 561.5,672.5 564.5,684.5 556.5,684.5" fill="none" stroke="#00ff00" shape-rendering="crispEdges"/>
<polygon points="603.5,672.5 605.5,672.5 608.5,684.5 600.5,684.5" fill="none" stroke="#00ff00" shape-rendering="crispEdges"/>
<polygon points="691.5,672.5 693.5,672.5 696.5,684.5 688.5,684.5" fill="none" stroke="#00ff00" shape-rendering="crispEdges"/>
<polygon points="868.5,672.5 870.5,672.5 873.5,684.5 865.5,684.5" fill="none" stroke="#00ff00" shape-rendering="crispEdges"/>
<polygon points="828.5,658.5 836.5,658.5 833.5,672.5 831.5,672.5" fill="none" stroke="#00ff00" shape-rendering="crispEdges"/>
<text x="832.5" y="656" fill="#00ff00" font-size="13" text-anchor="middle" font-family='"Liberation Mono", monospace'  xml:space="preserve">8</text>
<polygon points="517.5,673.5 524.5,680.5 510.5,680.5" fill="none" stroke="#00ff00" shape-rendering="crispEdges"/>
<polygon points="524.5,673.5 531.5,680.5 517.5,680.5" fill="none" stroke="#00ff00" shape-rendering="crispEdges"/>
<polygon points="533.5,673.5 540.5,680.5 526.5,680.5" fill="none" stroke="#00ff00" shape-rendering="crispEdges"/>
<polygon points="560.5,673.5 567.5,680.5 553.5,680.5" fill="none" stroke="#00ff00" shape-rendering="crispEdges"/>
<polygon points="604.5,673.5 611.5,680.5 597.5,680.5" fill="none" stroke="#00ff00" shape-rendering="crispEdges"/>
<polygon points="692.5,673.5 699.5,680.5 685.5,680.5" fill="none" stroke="#00ff00" shape-rendering="crispEdges"/>
<polygon points="869.5,673.5 876.5,680.5 862.5,680.5" fill="none" stroke="#00ff00" shape-rendering="crispEdges"/>
<polygon points="832.5,673.5 839.5,680.5 825.5,680.5" fill="#00ff00" stroke="#00ff00" shape-rendering="crispEdges"/>
<polygon points="509,665 517.5,672.5 509,680" fill="#00ff00"/>
<polygon points="878,665 869.5,672.5 878,680" fill="#00ff00"/>
</g>
<rect x="0" y="684" width="884" height="19" fill="#b4b4b4" />
<rect x="0" y="684" width="884" height="1" fill="#e0e0e0" />
<rect x="2" y="686" width="16" height="16" fill="#d0d0d0" />
<rect x="2" y="686" width="16" height="1" fill="#f0f0f0" />
<rect x="2" y="686" width="1" height="16" fill="#f0f0f0" />
<text x="6.50" y="699" fill="#000000" font-size="12.5" font-family='"Liberation Sans", sans-serif' textLength="6.10" lengthAdjust="spacingAndGlyphs" xml:space="preserve">1</text>
<text x="20.60" y="699" fill="#000000" font-size="12.5" font-family='"Liberation Sans", sans-serif' textLength="71.90" lengthAdjust="spacingAndGlyphs" xml:space="preserve">Start 50 MHz</text>
<text x="371.40" y="699" fill="#000000" font-size="12.5" font-family='"Liberation Sans", sans-serif' textLength="71.20" lengthAdjust="spacingAndGlyphs" xml:space="preserve">IFBW 70 kHz</text>
<text x="721.40" y="699" fill="#000000" font-size="12.5" font-family='"Liberation Sans", sans-serif' textLength="69.80" lengthAdjust="spacingAndGlyphs" xml:space="preserve">Stop 20 GHz</text>
<rect x="797" y="687" width="45" height="14" fill="#3c3c8c" />
<text x="802.70" y="699" fill="#ffffff" font-size="12.5" font-family='"Liberation Sans", sans-serif' textLength="34.00" lengthAdjust="spacingAndGlyphs" xml:space="preserve">16/16</text>
<rect x="844" y="687" width="25" height="14" fill="#3c3c8c" />
<text x="847.60" y="699" fill="#ffffff" font-size="12.5" font-family='"Liberation Sans", sans-serif' textLength="19.20" lengthAdjust="spacingAndGlyphs" xml:space="preserve">Cor</text>
<rect x="871" y="687" width="10" height="14" fill="#d0d0d0" />
<rect x="885" y="41" width="139" height="1" fill="#f0f0f0" />
<rect x="885" y="42" width="139" height="1" fill="#e6e6e6" />
<rect x="885" y="43" width="1" height="662" fill="#202020" />
<rect x="886" y="43" width="138" height="662" fill="#000000" />
<rect x="886" y="43" width="137" height="34" fill="#33335f" />
<rect x="886" y="43" width="137" height="1" fill="#8080b4" />
<rect x="886" y="44" width="137" height="1" fill="#5a5a8c" />
<rect x="886" y="43" width="1" height="34" fill="#8888bb" />
<rect x="886" y="75" width="137" height="2" fill="#000033" />
<rect x="1021" y="43" width="2" height="34" fill="#000033" />
<text x="943.70" y="64" fill="#ffffff" font-size="12.5" font-family='"Liberation Sans", sans-serif' textLength="23.00" lengthAdjust="spacingAndGlyphs" xml:space="preserve">S2P</text>
<rect x="886" y="78" width="137" height="34" fill="#b4b4b4" />
<rect x="886" y="78" width="137" height="1" fill="#f0f0f0" />
<rect x="886" y="78" width="1" height="34" fill="#f0f0f0" />
<rect x="886" y="110" width="137" height="2" fill="#808080" />
<rect x="1021" y="79" width="2" height="33" fill="#808080" />
<text x="929.70" y="100" fill="#000000" font-size="12.5" font-family='"Liberation Sans", sans-serif' textLength="49.00" lengthAdjust="spacingAndGlyphs" xml:space="preserve">[ 1-2 ]...</text>
<rect x="886" y="113" width="137" height="34" fill="#b4b4b4" />
<rect x="886" y="113" width="137" height="1" fill="#f0f0f0" />
<rect x="886" y="113" width="1" height="34" fill="#f0f0f0" />
<rect x="886" y="145" width="137" height="2" fill="#808080" />
<rect x="1021" y="114" width="2" height="33" fill="#808080" />
<text x="929.70" y="134" fill="#000000" font-size="12.5" font-family='"Liberation Sans", sans-serif' textLength="49.00" lengthAdjust="spacingAndGlyphs" xml:space="preserve">[ 1-3 ]...</text>
<rect x="886" y="148" width="137" height="34" fill="#b4b4b4" />
<rect x="886" y="148" width="137" height="1" fill="#f0f0f0" />
<rect x="886" y="148" width="1" height="34" fill="#f0f0f0" />
<rect x="886" y="180" width="137" height="2" fill="#808080" />
<rect x="1021" y="149" width="2" height="33" fill="#808080" />
<text x="929.70" y="170" fill="#000000" font-size="12.5" font-family='"Liberation Sans", sans-serif' textLength="49.00" lengthAdjust="spacingAndGlyphs" xml:space="preserve">[ 1-4 ]...</text>
<rect x="886" y="183" width="137" height="34" fill="#b4b4b4" />
<rect x="886" y="183" width="137" height="1" fill="#f0f0f0" />
<rect x="886" y="183" width="1" height="34" fill="#f0f0f0" />
<rect x="886" y="215" width="137" height="2" fill="#808080" />
<rect x="1021" y="184" width="2" height="33" fill="#808080" />
<text x="929.70" y="204" fill="#000000" font-size="12.5" font-family='"Liberation Sans", sans-serif' textLength="49.00" lengthAdjust="spacingAndGlyphs" xml:space="preserve">[ 2-3 ]...</text>
<rect x="886" y="218" width="137" height="34" fill="#b4b4b4" />
<rect x="886" y="218" width="137" height="1" fill="#f0f0f0" />
<rect x="886" y="218" width="1" height="34" fill="#f0f0f0" />
<rect x="886" y="250" width="137" height="2" fill="#808080" />
<rect x="1021" y="219" width="2" height="33" fill="#808080" />
<text x="929.70" y="240" fill="#000000" font-size="12.5" font-family='"Liberation Sans", sans-serif' textLength="49.00" lengthAdjust="spacingAndGlyphs" xml:space="preserve">[ 2-4 ]...</text>
<rect x="886" y="253" width="137" height="32" fill="#505050" />
<rect x="886" y="253" width="137" height="1" fill="#6a6a6a" />
<rect x="886" y="284" width="137" height="1" fill="#303030" />
<rect x="1022" y="253" width="1" height="32" fill="#303030" />
<text x="929.70" y="274" fill="#ffffff" font-size="12.5" font-family='"Liberation Sans", sans-serif' textLength="49.00" lengthAdjust="spacingAndGlyphs" xml:space="preserve">[ 3-4 ]...</text>
<rect x="886" y="286" width="137" height="3" fill="#1a1a50" />
<rect x="886" y="286" width="137" height="1" fill="#7777bb" />
<rect x="886" y="289" width="137" height="33" fill="#b4b4b4" />
<rect x="886" y="289" width="137" height="1" fill="#f0f0f0" />
<rect x="886" y="289" width="1" height="33" fill="#f0f0f0" />
<rect x="886" y="320" width="137" height="2" fill="#808080" />
<rect x="1021" y="290" width="2" height="32" fill="#808080" />
<text x="935.70" y="310" fill="#000000" font-size="12.5" font-family='"Liberation Sans", sans-serif' textLength="38.40" lengthAdjust="spacingAndGlyphs" xml:space="preserve">Return</text>
<rect x="886" y="323" width="137" height="380" fill="#4d4d4d" />
<rect x="886" y="323" width="137" height="1" fill="#606060" />
<rect x="886" y="702" width="137" height="1" fill="#8a8a8a" />
<rect x="0" y="703" width="1024" height="25" fill="#000000" />
<rect x="0" y="705" width="1024" height="21" fill="#4a4a4a" />
<rect x="704.5" y="707.5" width="46" height="16" fill="#3c3c8c" stroke="#2a2a2a"/>
<text x="710.70" y="721.5" fill="#ffffff" font-size="16" font-family='"Liberation Sans", sans-serif' textLength="34.60" lengthAdjust="spacingAndGlyphs">Hold</text>
<rect x="753.5" y="707.5" width="38" height="16" fill="#4a4a4a" stroke="#2a2a2a"/>
<text x="756.20" y="721.5" fill="#8a8a8a" font-size="16" font-family='"Liberation Sans", sans-serif' textLength="32.20" lengthAdjust="spacingAndGlyphs">Stop</text>
<rect x="794.5" y="707.5" width="51" height="16" fill="#4a4a4a" stroke="#2a2a2a"/>
<text x="797.20" y="721.5" fill="#8a8a8a" font-size="16" font-family='"Liberation Sans", sans-serif' textLength="47.40" lengthAdjust="spacingAndGlyphs">ExtRef</text>
<rect x="848.5" y="707.5" width="30" height="16" fill="#4a4a4a" stroke="#2a2a2a"/>
<text x="851.30" y="721.5" fill="#8a8a8a" font-size="16" font-family='"Liberation Sans", sans-serif' textLength="25.40" lengthAdjust="spacingAndGlyphs">Svc</text>
<rect x="881.5" y="707.5" width="138" height="16" fill="#4a4a4a" stroke="#2a2a2a"/>
<text x="884.80" y="721.5" fill="#ffffff" font-size="16" font-family='"Liberation Sans", sans-serif' textLength="131.30" lengthAdjust="spacingAndGlyphs">2022-01-20 09:28</text>
</svg></body></html>
